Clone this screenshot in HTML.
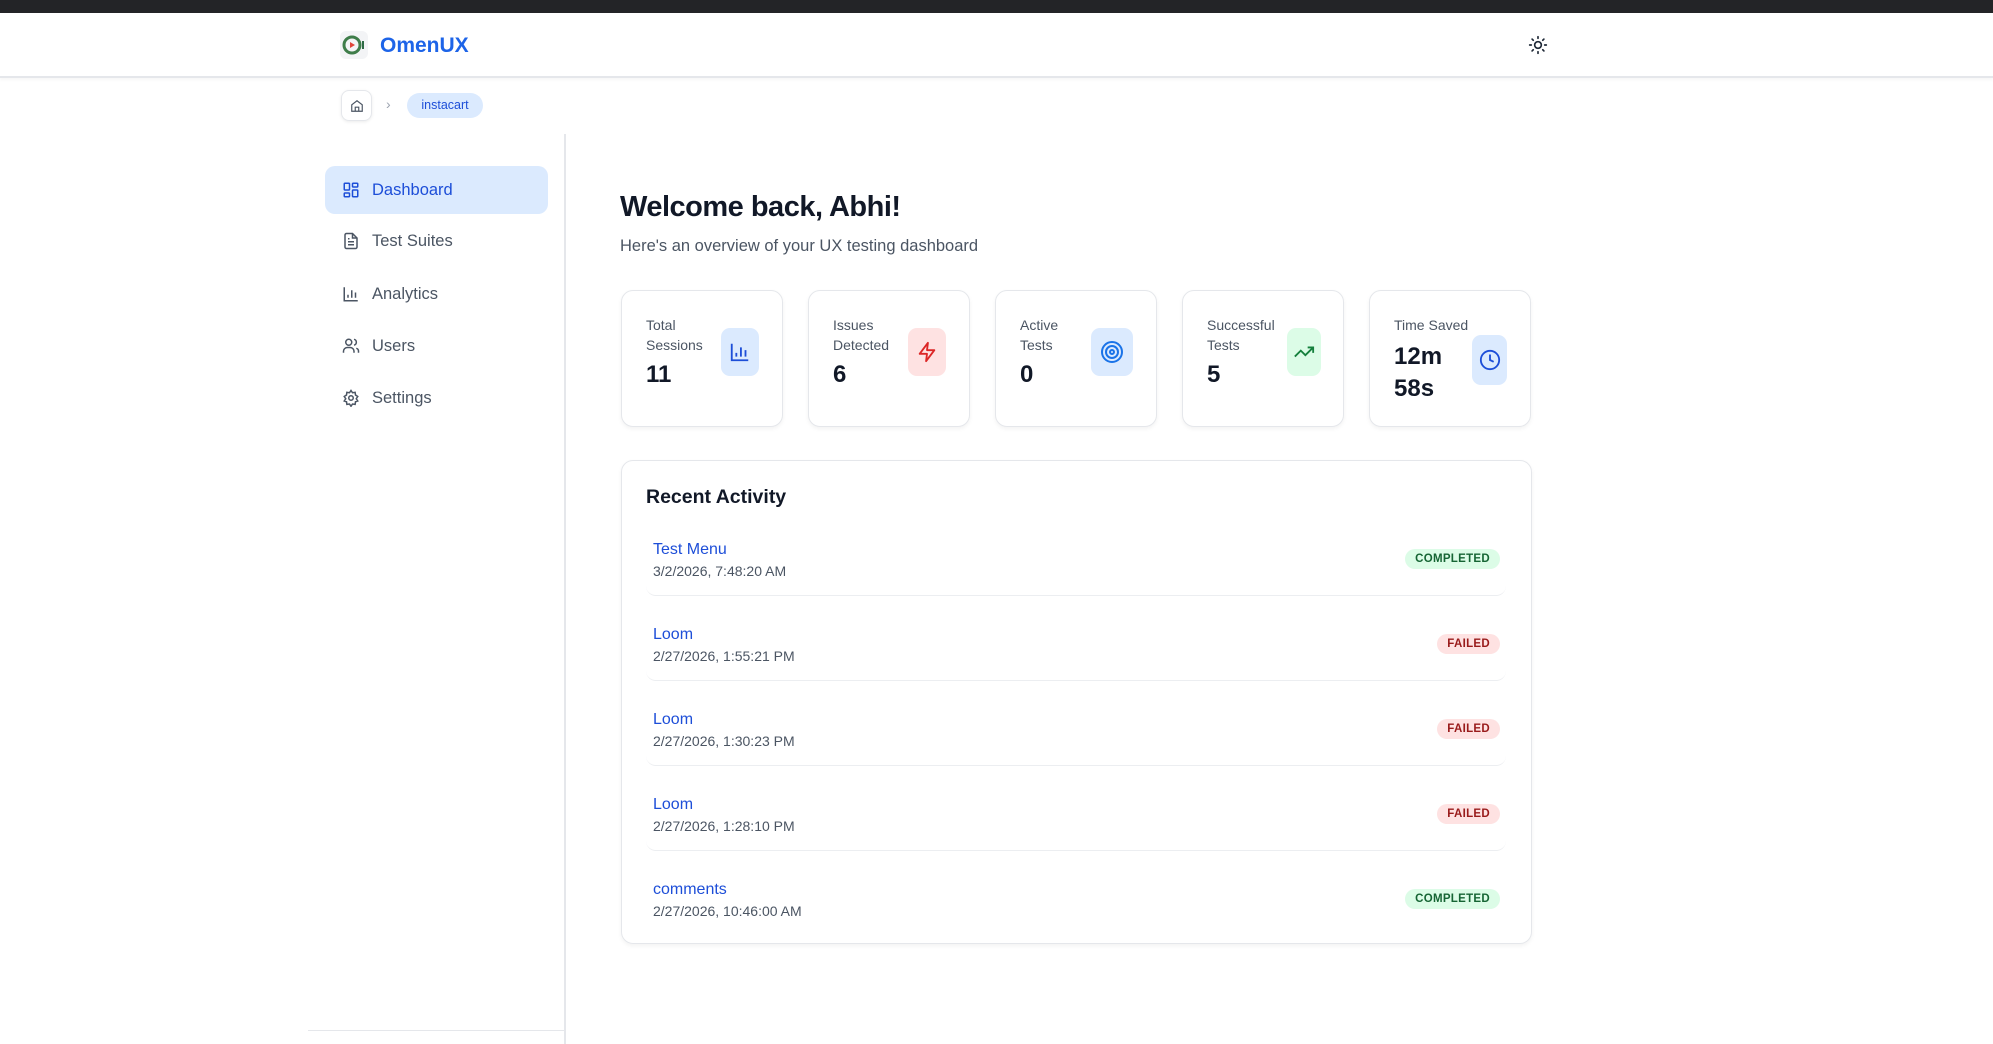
<!DOCTYPE html>
<html><head><meta charset="utf-8"><style>
*{box-sizing:border-box;margin:0;padding:0}
body{width:1993px;height:1044px;overflow:hidden;background:#fff;font-family:"Liberation Sans",sans-serif;position:relative;color:#111827}
.abs{position:absolute}
.top{left:0;top:0;width:1993px;height:13px;background:#232427}
.hdr{left:0;top:13px;width:1993px;height:65px;background:#fff;border-bottom:2px solid #e5e7eb;box-shadow:0 2px 3px rgba(0,0,0,.04)}
.nav{left:325px;width:223px;height:48px;border-radius:10px;display:flex;align-items:center;padding-left:17px;font-size:16.5px;color:#4b5563}
.nav svg{margin-right:12px}
.card{top:290px;width:162px;height:137px;border:1.5px solid #e5e7eb;border-radius:12px;background:#fff;box-shadow:0 2px 4px rgba(0,0,0,.05)}
.lbl{position:absolute;left:24px;top:24px;font-size:14px;line-height:20px;color:#4b5563}
.num{position:absolute;left:24px;top:70px;font-size:24px;font-weight:bold;color:#111827}
.ib{position:absolute;width:38px;height:48px;border-radius:9px;display:flex;align-items:center;justify-content:center}
.row{left:646px;width:860px;height:68px;border-bottom:1.5px solid #eceef1;border-radius:0 0 10px 10px}
.rt{position:absolute;left:7px;top:13px;font-size:16px;color:#1d4ed8}
.rd{position:absolute;left:7px;top:35px;font-size:14px;color:#4b5563}
.bd{position:absolute;right:6px;top:21px;height:20px;border-radius:10px;font-size:11.5px;line-height:20px;padding:0 10px;font-weight:bold;letter-spacing:.3px}
.ok{background:#dcfce7;color:#166534}.fail{background:#fee2e2;color:#991b1b}
</style></head><body>
<div class="abs top"></div>
<div class="abs hdr"></div>
<div class="abs" style="left:340px;top:31px;width:28px;height:28px;border-radius:6px;background:#f3f4f6"></div>
<svg class="abs" style="left:341px;top:32px" width="26" height="26" viewBox="0 0 26 26"><circle cx="11" cy="13" r="8" fill="none" stroke="#3f7d4a" stroke-width="3"/><path d="M9 10l5 3-5 3z" fill="#e0453a"/><path d="M22 9v8" stroke="#2e6b45" stroke-width="2"/></svg>
<div class="abs" style="left:380px;top:34px;font-size:21px;font-weight:bold;color:#1d64e8">OmenUX</div>
<svg class="abs" style="left:1528px;top:35px" width="20" height="20" viewBox="0 0 24 24" fill="none" stroke="#1f2937" stroke-width="2" stroke-linecap="round"><circle cx="12" cy="12" r="4"/><path d="M12 2v2M12 20v2M4.9 4.9l1.4 1.4M17.7 17.7l1.4 1.4M2 12h2M20 12h2M6.3 17.7l-1.4 1.4M19.1 4.9l-1.4 1.4"/></svg>
<div class="abs" style="left:341px;top:90px;width:31px;height:31px;border:1.5px solid #e5e7eb;border-radius:8px;box-shadow:0 1px 3px rgba(0,0,0,.08);display:flex;align-items:center;justify-content:center"><svg width="14" height="14" viewBox="0 0 24 24" fill="none" stroke="#4b5563" stroke-width="2"><path d="M3 10l9-7 9 7v11H3z"/><path d="M9 21v-7h6v7"/></svg></div>
<div class="abs" style="left:386px;top:96px;font-size:14px;color:#9ca3af">›</div>
<div class="abs" style="left:407px;top:93px;width:76px;height:25px;border-radius:13px;background:#dbeafe;color:#1d4ed8;font-size:12.5px;line-height:25px;text-align:center">instacart</div>
<div class="abs" style="left:564px;top:134px;width:1.5px;height:910px;background:#e5e7eb"></div>
<div class="abs" style="left:308px;top:1030px;width:256px;height:1px;background:#e5e7eb"></div>
<div class="abs nav" style="top:166px;background:#dbeafe;color:#1d4ed8"><svg width="18" height="18" viewBox="0 0 24 24" fill="none" stroke="#1d4ed8" stroke-width="2"><rect x="3" y="3" width="7" height="9" rx="1"/><rect x="14" y="3" width="7" height="5" rx="1"/><rect x="14" y="12" width="7" height="9" rx="1"/><rect x="3" y="16" width="7" height="5" rx="1"/></svg>Dashboard</div>
<div class="abs nav" style="top:217px"><svg width="18" height="18" viewBox="0 0 24 24" fill="none" stroke="#4b5563" stroke-width="2"><path d="M14 2H6a2 2 0 0 0-2 2v16a2 2 0 0 0 2 2h12a2 2 0 0 0 2-2V8z"/><path d="M14 2v6h6M8 13h8M8 17h8M8 9h2"/></svg>Test Suites</div>
<div class="abs nav" style="top:270px"><svg width="18" height="18" viewBox="0 0 24 24" fill="none" stroke="#4b5563" stroke-width="2"><path d="M3 3v18h18M8 17v-4M13 17V7M18 17v-7"/></svg>Analytics</div>
<div class="abs nav" style="top:322px"><svg width="18" height="18" viewBox="0 0 24 24" fill="none" stroke="#4b5563" stroke-width="2"><circle cx="9" cy="7" r="4"/><path d="M2 21v-2a5 5 0 0 1 5-5h4a5 5 0 0 1 5 5v2M16 3.1a4 4 0 0 1 0 7.8M22 21v-2a4 4 0 0 0-3-3.9"/></svg>Users</div>
<div class="abs nav" style="top:374px"><svg width="18" height="18" viewBox="0 0 24 24" fill="none" stroke="#4b5563" stroke-width="2"><circle cx="12" cy="12" r="3"/><path d="M12 2l2 3 3.5-.5.5 3.5 3 2-2 3 2 3-3 1-.5 3.5-3.5-.5-2 3-2-3-3.5.5-.5-3.5-3-1 2-3-2-3 3-2 .5-3.5L10 5z"/></svg>Settings</div>
<div class="abs" style="left:620px;top:191px;font-size:29px;font-weight:bold;letter-spacing:-.5px">Welcome back, Abhi!</div>
<div class="abs" style="left:620px;top:237px;font-size:16.5px;color:#4b5563">Here's an overview of your UX testing dashboard</div>

<div class="abs card" style="left:621px"><div class="lbl">Total<br>Sessions</div><div class="num">11</div><div class="ib" style="left:99px;top:37px;background:#dbeafe"><svg width="22" height="22" viewBox="0 0 24 24" fill="none" stroke="#1d4ed8" stroke-width="2"><path d="M3 3v18h18M8 17v-4M13 17V7M18 17v-7"/></svg></div></div>
<div class="abs card" style="left:808px"><div class="lbl">Issues<br>Detected</div><div class="num">6</div><div class="ib" style="left:99px;top:37px;background:#fee2e2"><svg width="22" height="22" viewBox="0 0 24 24" fill="none" stroke="#dc2626" stroke-width="2" stroke-linejoin="round"><path d="M13 2L4 14h8l-1 8 9-12h-8z"/></svg></div></div>
<div class="abs card" style="left:995px"><div class="lbl">Active<br>Tests</div><div class="num">0</div><div class="ib" style="left:95px;top:37px;width:42px;background:#dbeafe"><svg width="24" height="24" viewBox="0 0 24 24" fill="none" stroke="#1a73e8" stroke-width="2"><circle cx="12" cy="12" r="10"/><circle cx="12" cy="12" r="6"/><circle cx="12" cy="12" r="2"/></svg></div></div>
<div class="abs card" style="left:1182px"><div class="lbl">Successful<br>Tests</div><div class="num">5</div><div class="ib" style="left:104px;top:37px;width:34px;background:#dcfce7"><svg width="22" height="22" viewBox="0 0 24 24" fill="none" stroke="#15803d" stroke-width="2"><path d="M22 7l-8.5 8.5-5-5L2 17M16 7h6v6"/></svg></div></div>
<div class="abs card" style="left:1369px"><div class="lbl">Time Saved</div><div class="num" style="top:50px;line-height:32px">12m<br>58s</div><div class="ib" style="left:102px;top:44px;width:35px;height:50px;background:#dbeafe"><svg width="22" height="22" viewBox="0 0 24 24" fill="none" stroke="#1d4ed8" stroke-width="2"><circle cx="12" cy="12" r="10"/><path d="M12 6v6l4 2"/></svg></div></div>

<div class="abs" style="left:621px;top:460px;width:911px;height:484px;border:1.5px solid #e5e7eb;border-radius:12px;box-shadow:0 2px 4px rgba(0,0,0,.05)"></div>
<div class="abs" style="left:646px;top:486px;font-size:19.5px;font-weight:bold">Recent Activity</div>
<div class="abs row" style="top:528px"><div class="rt">Test Menu</div><div class="rd">3/2/2026, 7:48:20 AM</div><div class="bd ok">COMPLETED</div></div>
<div class="abs row" style="top:613px"><div class="rt">Loom</div><div class="rd">2/27/2026, 1:55:21 PM</div><div class="bd fail">FAILED</div></div>
<div class="abs row" style="top:698px"><div class="rt">Loom</div><div class="rd">2/27/2026, 1:30:23 PM</div><div class="bd fail">FAILED</div></div>
<div class="abs row" style="top:783px"><div class="rt">Loom</div><div class="rd">2/27/2026, 1:28:10 PM</div><div class="bd fail">FAILED</div></div>
<div class="abs row" style="top:868px;border-bottom:none"><div class="rt">comments</div><div class="rd">2/27/2026, 10:46:00 AM</div><div class="bd ok">COMPLETED</div></div>
</body></html>
